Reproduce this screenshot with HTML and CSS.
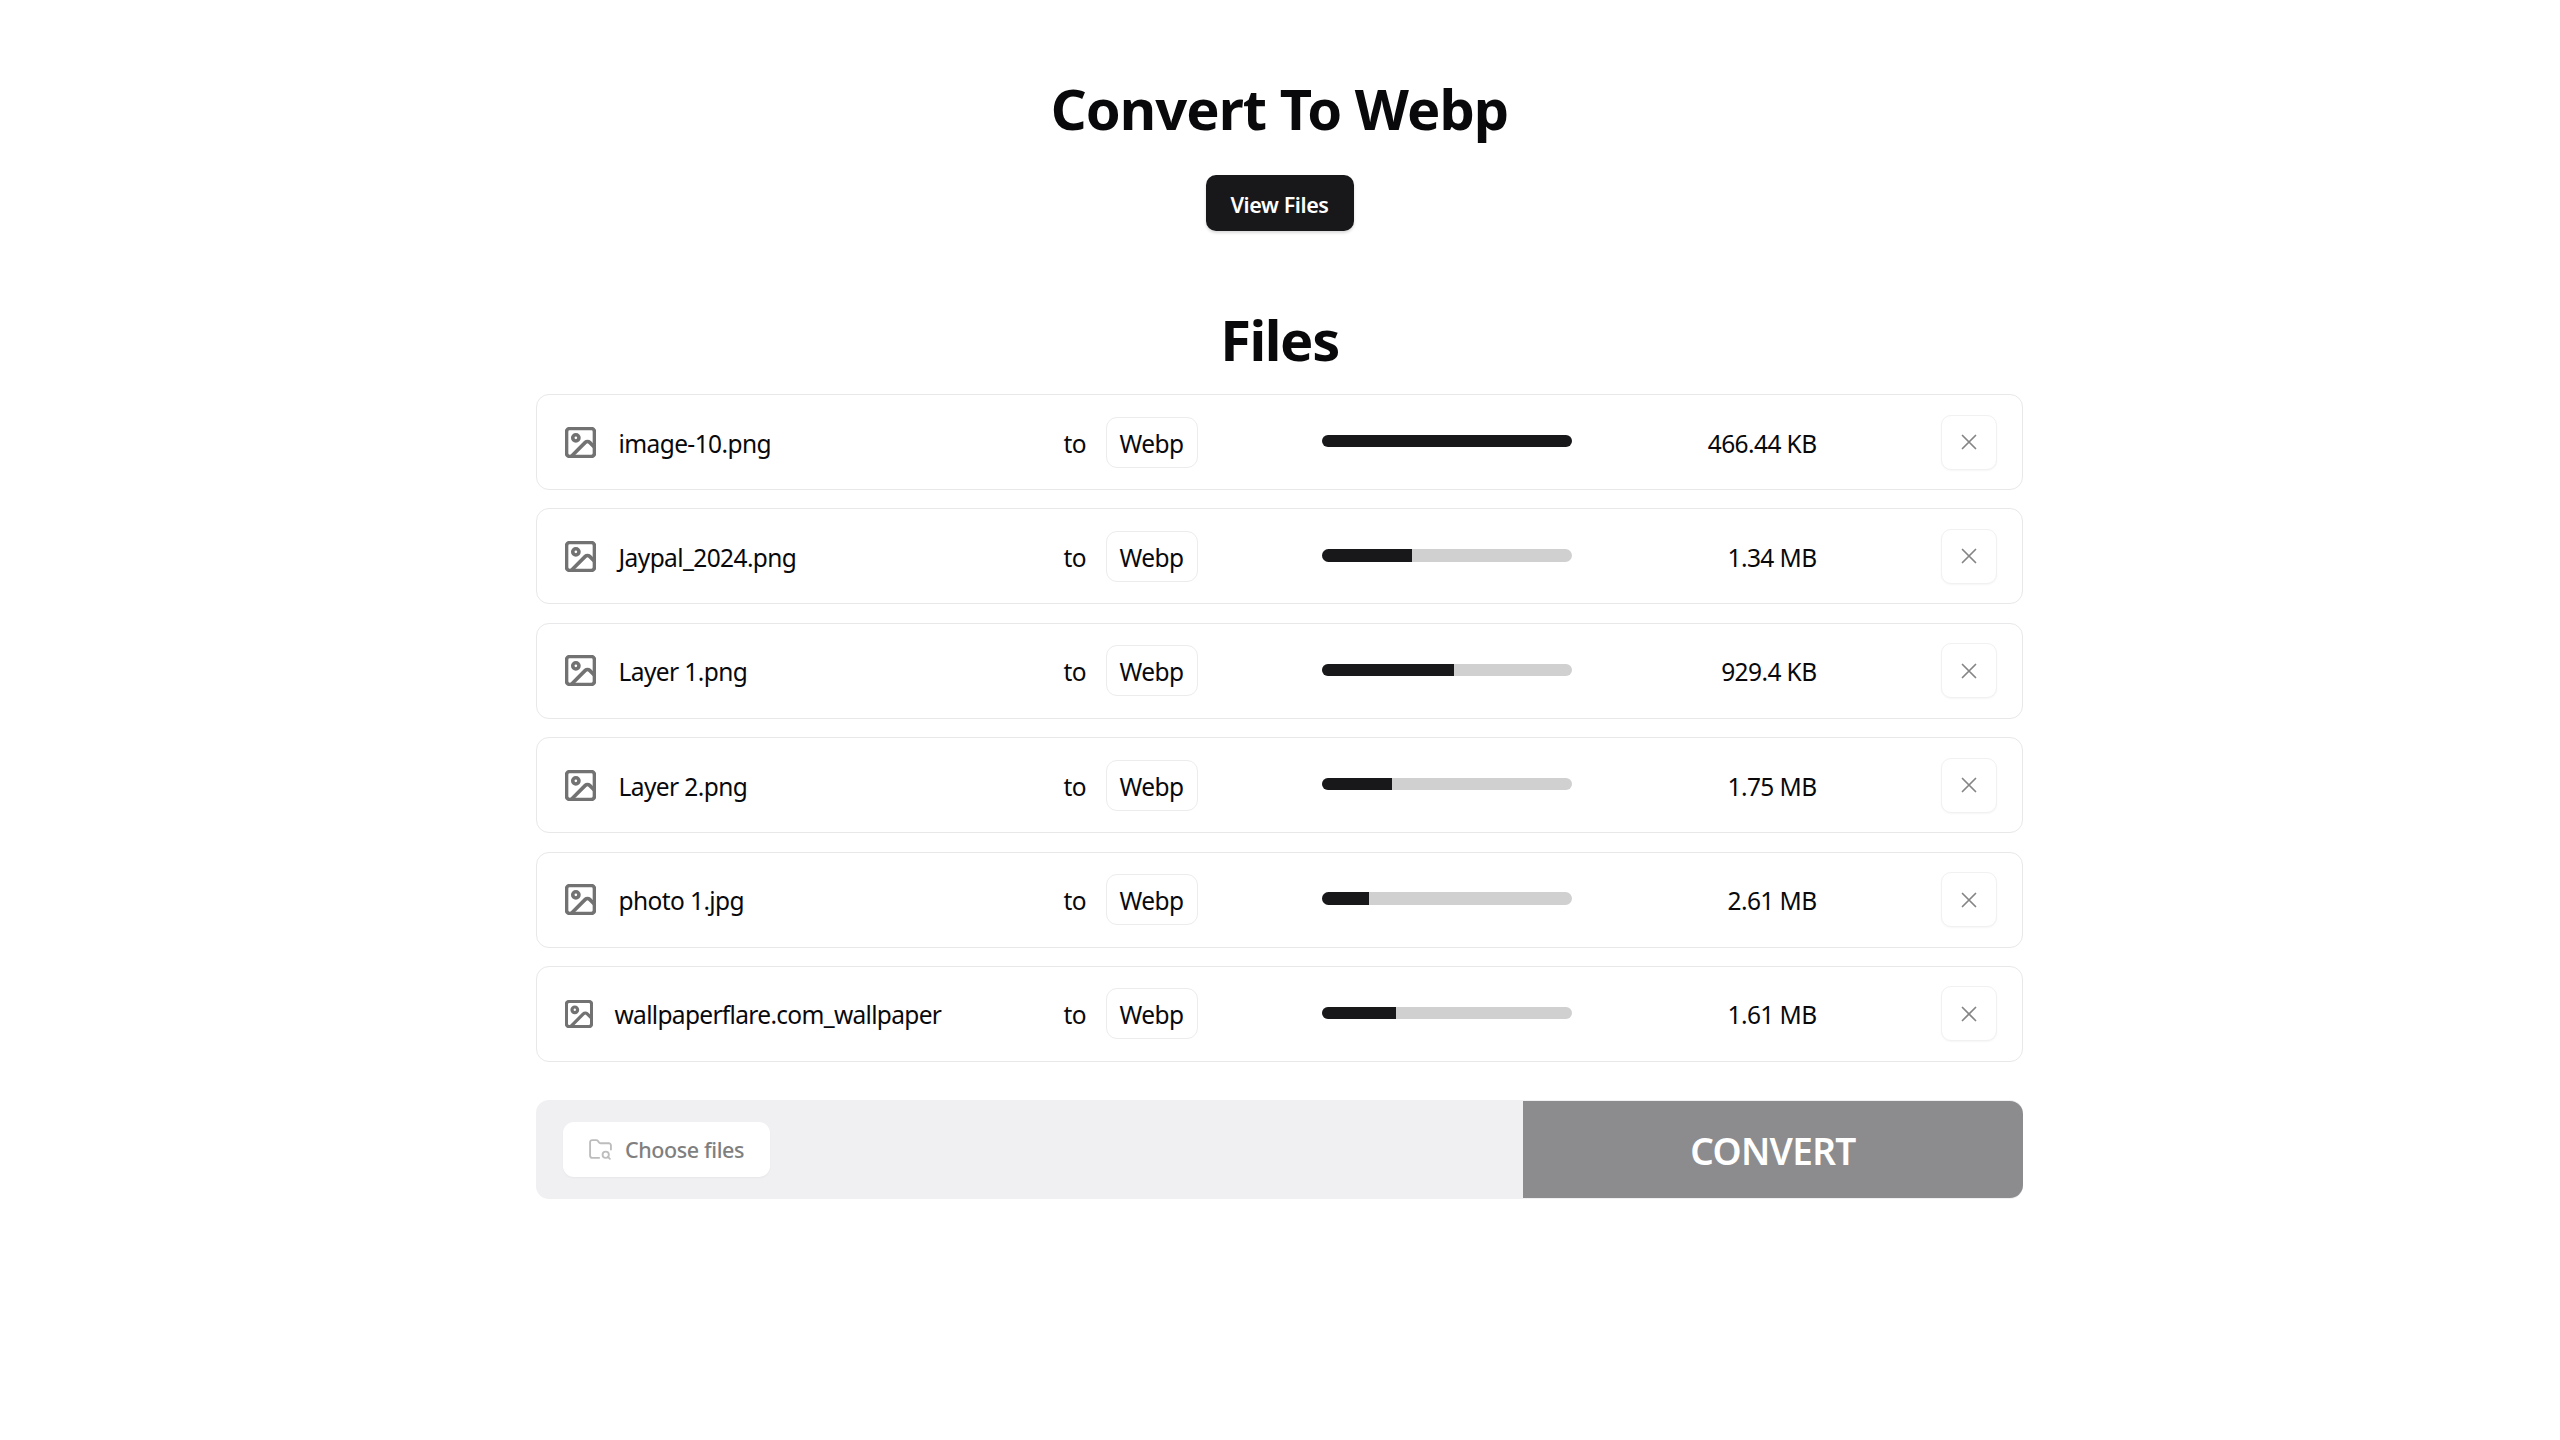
FILE: index.html
```html
<!DOCTYPE html>
<html lang="en">
<head>
<meta charset="utf-8">
<title>Convert To Webp</title>
<link rel="stylesheet" href="styles.css">
</head>
<body>
<svg class="defs" aria-hidden="true">
  <symbol id="img" viewBox="2 2 20 20"><rect x="3" y="3" width="18" height="18" rx="2"/><circle cx="9" cy="9" r="2"/><path d="m21 15-3.086-3.086a2 2 0 0 0-2.828 0L6 21"/></symbol>
  <symbol id="x" viewBox="0 0 24 24"><path d="M18 6 6 18M6 6l12 12"/></symbol>
</svg>
<main class="page">
  <h1 class="title">Convert To Webp</h1>
  <a class="view-btn">View Files</a>
  <h2 class="subtitle">Files</h2>
  <section class="list">
    <div class="row">
      <div class="name"><svg class="file-icon"><use href="#img"/></svg><span class="label">image-10.png</span></div>
      <span class="to label">to</span><span class="format"><span class="label">Webp</span></span>
      <div class="track"><div class="fill" style="width:100%"></div></div>
      <span class="size label">466.44 KB</span>
      <button class="remove"><svg class="x-icon"><use href="#x"/></svg></button>
    </div>
    <div class="row">
      <div class="name"><svg class="file-icon"><use href="#img"/></svg><span class="label">Jaypal_2024.png</span></div>
      <span class="to label">to</span><span class="format"><span class="label">Webp</span></span>
      <div class="track"><div class="fill" style="width:36%"></div></div>
      <span class="size label">1.34 MB</span>
      <button class="remove"><svg class="x-icon"><use href="#x"/></svg></button>
    </div>
    <div class="row">
      <div class="name"><svg class="file-icon"><use href="#img"/></svg><span class="label">Layer 1.png</span></div>
      <span class="to label">to</span><span class="format"><span class="label">Webp</span></span>
      <div class="track"><div class="fill" style="width:52.8%"></div></div>
      <span class="size label">929.4 KB</span>
      <button class="remove"><svg class="x-icon"><use href="#x"/></svg></button>
    </div>
    <div class="row">
      <div class="name"><svg class="file-icon"><use href="#img"/></svg><span class="label">Layer 2.png</span></div>
      <span class="to label">to</span><span class="format"><span class="label">Webp</span></span>
      <div class="track"><div class="fill" style="width:28%"></div></div>
      <span class="size label">1.75 MB</span>
      <button class="remove"><svg class="x-icon"><use href="#x"/></svg></button>
    </div>
    <div class="row">
      <div class="name"><svg class="file-icon"><use href="#img"/></svg><span class="label">photo 1.jpg</span></div>
      <span class="to label">to</span><span class="format"><span class="label">Webp</span></span>
      <div class="track"><div class="fill" style="width:18.8%"></div></div>
      <span class="size label">2.61 MB</span>
      <button class="remove"><svg class="x-icon"><use href="#x"/></svg></button>
    </div>
    <div class="row">
      <div class="name name-long"><svg class="file-icon"><use href="#img"/></svg><span class="label">wallpaperflare.com_wallpaper</span></div>
      <span class="to label">to</span><span class="format"><span class="label">Webp</span></span>
      <div class="track"><div class="fill" style="width:29.6%"></div></div>
      <span class="size label">1.61 MB</span>
      <button class="remove"><svg class="x-icon"><use href="#x"/></svg></button>
    </div>
  </section>
  <section class="actions">
    <div class="picker">
      <label class="choose">
        <svg class="folder-icon" viewBox="0 0 24 24"><path d="M10.7 20H4a2 2 0 0 1-2-2V5a2 2 0 0 1 2-2h3.9a2 2 0 0 1 1.69.9l.81 1.2a2 2 0 0 0 1.67.9H20a2 2 0 0 1 2 2v4.1"/><circle cx="17" cy="17" r="3"/><path d="m21 21-1.9-1.9"/></svg>
        <span>Choose files</span>
      </label>
    </div>
    <button class="convert">CONVERT</button>
  </section>
</main>
</body>
</html>
```
FILE: styles.css
```css
* { box-sizing: border-box; }
html, body { margin: 0; padding: 0; background: #fff; }
body { padding-right: 1px; font-family: "Noto Sans", "Open Sans", sans-serif; color: #09090b; }
.defs { position: absolute; width: 0; height: 0; }
.page { width: 1487px; margin: 0 auto; padding-top: 69px; display: flex; flex-direction: column; align-items: center; }
.title { margin: 0; font-size: 56px; line-height: 78px; font-weight: 700; letter-spacing: -0.95px; white-space: nowrap; }
.view-btn { margin-top: 28px; width: 148px; height: 56px; padding-top: 2px; display: flex; align-items: center; justify-content: center; background: #18181b; color: #fff; border-radius: 10px; font-size: 21.5px; font-weight: 600; letter-spacing: -0.4px; box-shadow: 0 2px 3px rgba(0,0,0,.15); }
.subtitle { margin: 69px 0 0; font-size: 56px; line-height: 78px; font-weight: 700; letter-spacing: -1.4px; }
.list { width: 100%; margin-top: 16px; display: flex; flex-direction: column; gap: 18.4px; }
.row { height: 96px; display: flex; align-items: center; border: 1.6px solid #e8e8ea; border-radius: 13px; padding-left: 27.5px; font-size: 24.5px; letter-spacing: -0.6px; white-space: nowrap; }
.label { padding-top: 2px; }
.name { width: 499px; display: flex; align-items: center; gap: 23px; }
.name-long { gap: 22px; letter-spacing: -0.68px; }
.file-icon { width: 31px; height: 31px; fill: none; stroke: #727272; stroke-width: 2.3; stroke-linecap: round; stroke-linejoin: round; flex: none; }
.name-long .file-icon { width: 28px; height: 28px; }
.to { width: 42px; }
.format { width: 92px; height: 51px; display: flex; align-items: center; justify-content: center; border: 1.6px solid #ececee; border-radius: 11px; }
.track { width: 250px; height: 12.4px; margin-left: 124px; margin-top: -2px; background: #d0d0d0; border-radius: 7px; overflow: hidden; }
.fill { height: 100%; background: #18181b; }
.size { width: 245px; text-align: right; }
.remove { width: 56.6px; height: 55px; margin-left: 124px; padding: 0; display: flex; align-items: center; justify-content: center; background: #fff; border: 1.6px solid #f1f1f2; border-radius: 10px; box-shadow: 0 1px 2px rgba(0,0,0,.04); }
.x-icon { width: 26px; height: 26px; fill: none; stroke: #858585; stroke-width: 1.6; stroke-linecap: round; }
.actions { width: 100%; height: 99.5px; margin-top: 38px; display: flex; background: #f0f0f2; border-radius: 13px; }
.picker { flex: 1; display: flex; align-items: center; padding-left: 27px; }
.choose { width: 207px; height: 55px; display: flex; align-items: center; padding-left: 25px; gap: 12px; background: #fff; border-radius: 11px; color: #7f7f7f; font-size: 21.5px; font-weight: 500; letter-spacing: -0.4px; box-shadow: 0 1px 2px rgba(0,0,0,.04); }
.folder-icon { width: 25px; height: 25px; fill: none; stroke: #bdbdbd; stroke-width: 1.8; stroke-linecap: round; stroke-linejoin: round; flex: none; }
.convert { width: 500px; height: 97.5px; margin-top: 1px; padding: 2px 0 0; border: 0; background: #8c8c8e; color: #fff; border-radius: 0 13px 13px 0; font-family: inherit; font-size: 37px; font-weight: 600; letter-spacing: -0.7px; }
```
